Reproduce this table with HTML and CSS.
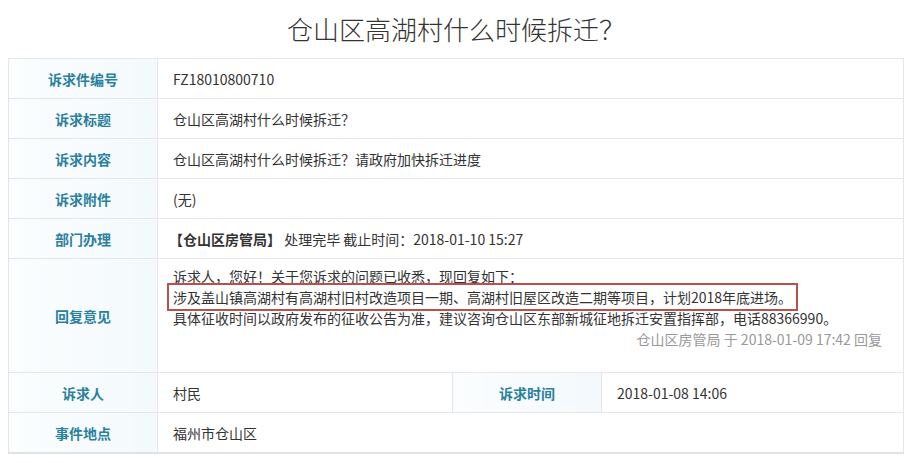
FILE: index.html
```html
<!DOCTYPE html>
<html lang="zh-CN">
<head>
<meta charset="UTF-8">
<title>诉求详情</title>
<link rel="stylesheet" href="styles.css">
</head>
<body>
<div class="page">
    <h1 class="title">仓山区高湖村什么时候拆迁？</h1>

    <table class="detail">
        <colgroup>
            <col class="col-label">
            <col class="col-value">
            <col class="col-label">
            <col>
        </colgroup>
        <tr>
            <th>诉求件编号</th>
            <td colspan="3">FZ18010800710</td>
        </tr>
        <tr>
            <th>诉求标题</th>
            <td colspan="3">仓山区高湖村什么时候拆迁？</td>
        </tr>
        <tr>
            <th>诉求内容</th>
            <td colspan="3">仓山区高湖村什么时候拆迁？请政府加快拆迁进度</td>
        </tr>
        <tr>
            <th>诉求附件</th>
            <td colspan="3">(无)</td>
        </tr>
        <tr>
            <th>部门办理</th>
            <td colspan="3"><b class="dept">【仓山区房管局】</b> 处理完毕 截止时间：2018-01-10 15:27</td>
        </tr>
        <tr class="reply-row">
            <th>回复意见</th>
            <td colspan="3" class="reply">
                <div>诉求人，您好！关于您诉求的问题已收悉，现回复如下：</div>
                <div><span class="mark">涉及盖山镇高湖村有高湖村旧村改造项目一期、高湖村旧屋区改造二期等项目，计划2018年底进场。</span></div>
                <div>具体征收时间以政府发布的征收公告为准，建议咨询仓山区东部新城征地拆迁安置指挥部，电话88366990。</div>
                <div class="sign">仓山区房管局 于 2018-01-09 17:42 回复</div>
            </td>
        </tr>
        <tr>
            <th>诉求人</th>
            <td>村民</td>
            <th>诉求时间</th>
            <td>2018-01-08 14:06</td>
        </tr>
        <tr>
            <th>事件地点</th>
            <td colspan="3">福州市仓山区</td>
        </tr>
    </table>
</div>
</body>
</html>
```

FILE: styles.css
```css
body {
    margin: 0;
    background: #fff;
    font-family: "Noto Sans CJK SC", "Noto Sans", sans-serif;
    color: #333;
}

.page {
    padding: 0 9px 0 8px;
}

.title {
    margin: 0;
    height: 58px;
    line-height: 58px;
    text-align: center;
    font-size: 26px;
    font-weight: 300;
    color: #333;
}

.detail {
    width: 100%;
    border-collapse: collapse;
    table-layout: fixed;
    border-bottom: 2px solid #e0e2e4;
}

.col-label {
    width: 149px;
}

.col-value {
    width: 295px;
}

.detail th,
.detail td {
    height: 39px;
    border: 1px solid #e4e6e8;
    font-size: 14px;
    padding: 0 15px;
}

.detail th {
    background: linear-gradient(to right, #fbfdfe, #f3f9fc);
    color: #2a809f;
    font-weight: bold;
    text-align: center;
}

.detail td {
    background: #fff;
    text-align: left;
}

.dept {
    font-weight: bold;
    margin-left: -4px;
}

.reply-row th {
    height: 113px;
}

.detail .reply {
    height: 106px;
    vertical-align: top;
    padding: 7px 21px 0 15px;
    line-height: 21px;
}

.mark {
    border: 2px solid #b9504b;
    padding: 2px 4px;
    margin-left: -6px;
}

.sign {
    text-align: right;
    color: #999;
}
```
